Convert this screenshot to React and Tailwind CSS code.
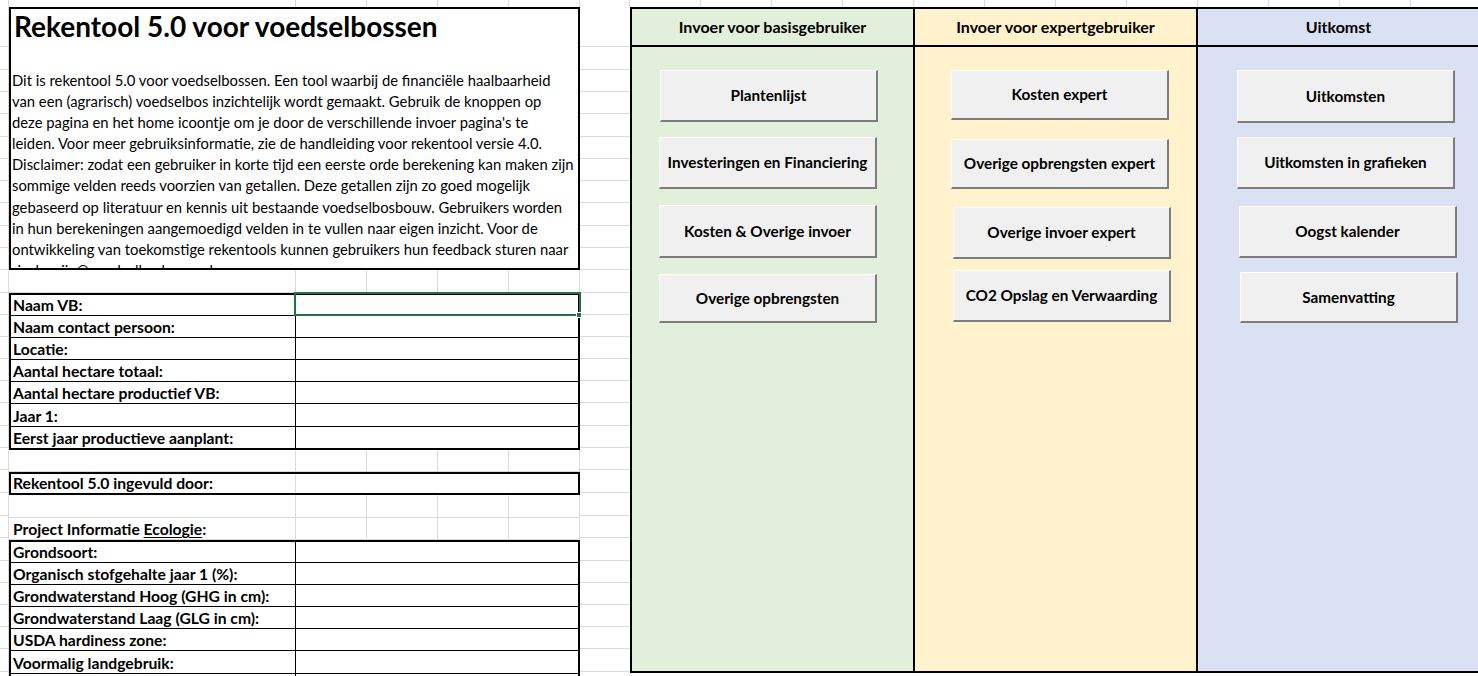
import React from 'react';

const GRID = 'border-[#dadada]';

// row heights (px) of the sheet, starting at y=7
const rowHeights = [40, 23, 22, 22, 23, 22, 22, 22, 23, 22, 22, 23, 22, 22, 22, 22, 22, 23, 22, 22, 23, 23, 22, 23, 22, 22, 22, 22, 23, 22];
const hCls = { 40: 'h-[40px]', 23: 'h-[23px]', 22: 'h-[22px]', 21: 'h-[21px]' };

const description = [
  'Dit is rekentool 5.0 voor voedselbossen. Een tool waarbij de financiële haalbaarheid',
  'van een (agrarisch) voedselbos inzichtelijk wordt gemaakt. Gebruik de knoppen op',
  "deze pagina en het home icoontje om je door de verschillende invoer pagina's te",
  'leiden. Voor meer gebruiksinformatie, zie de handleiding voor rekentool versie 4.0.',
  'Disclaimer: zodat een gebruiker in korte tijd een eerste orde berekening kan maken zijn',
  'sommige velden reeds voorzien van getallen. Deze getallen zijn zo goed mogelijk',
  'gebaseerd op literatuur en kennis uit bestaande voedselbosbouw. Gebruikers worden',
  'in hun berekeningen aangemoedigd velden in te vullen naar eigen inzicht. Voor de',
  'ontwikkeling van toekomstige rekentools kunnen gebruikers hun feedback sturen naar',
  'rinske.vijn@voedselbosbouw.nl',
];

const projectRows = [
  { label: 'Naam VB:', h: 21, selected: true },
  { label: 'Naam contact persoon:', h: 22 },
  { label: 'Locatie:', h: 22 },
  { label: 'Aantal hectare totaal:', h: 22 },
  { label: 'Aantal hectare productief VB:', h: 22 },
  { label: 'Jaar 1:', h: 23 },
  { label: 'Eerst jaar productieve aanplant:', h: 21 },
];

const ecologyRows = [
  { label: 'Grondsoort:', h: 21 },
  { label: 'Organisch stofgehalte jaar 1 (%):', h: 22 },
  { label: 'Grondwaterstand Hoog (GHG in cm):', h: 22 },
  { label: 'Grondwaterstand Laag (GLG in cm):', h: 22 },
  { label: 'USDA hardiness zone:', h: 22 },
  { label: 'Voormalig landgebruik:', h: 23 },
  { label: '', h: 22 },
];

const panels = [
  {
    title: 'Invoer voor basisgebruiker',
    bg: 'bg-[#e2efda]',
    buttons: [
      { label: 'Plantenlijst', cls: 'ml-[28px] mt-[23px] h-[52px]' },
      { label: 'Investeringen en Financiering', cls: 'ml-[27px] mt-[15px] h-[52px]' },
      { label: 'Kosten & Overige invoer', cls: 'ml-[27px] mt-[16px] h-[53px]' },
      { label: 'Overige opbrengsten', cls: 'ml-[27px] mt-[16px] h-[49px]' },
    ],
  },
  {
    title: 'Invoer voor expertgebruiker',
    bg: 'bg-[#fff2cc]',
    buttons: [
      { label: 'Kosten expert', cls: 'ml-[36px] mt-[23px] h-[50px]' },
      { label: 'Overige opbrengsten expert', cls: 'ml-[36px] mt-[19px] h-[50px]' },
      { label: 'Overige invoer expert', cls: 'ml-[38px] mt-[18px] h-[52px]' },
      { label: 'CO2 Opslag en Verwaarding', cls: 'ml-[38px] mt-[11px] h-[52px]' },
    ],
  },
  {
    title: 'Uitkomst',
    bg: 'bg-[#d9e1f2]',
    buttons: [
      { label: 'Uitkomsten', cls: 'ml-[39px] mt-[23px] h-[53px]' },
      { label: 'Uitkomsten in grafieken', cls: 'ml-[39px] mt-[14px] h-[52px]' },
      { label: 'Oogst kalender', cls: 'ml-[41px] mt-[17px] h-[52px]' },
      { label: 'Samenvatting', cls: 'ml-[42px] mt-[14px] h-[51px]' },
    ],
  },
];

const GapRow = ({ h, children }) => (
  <div className={`flex ${hCls[h]} border-b ${GRID}`}>
    <div className={`relative w-[287px] shrink-0 border-r ${GRID}`}>{children}</div>
    <div className={`w-[71px] shrink-0 border-r ${GRID}`} />
    <div className={`w-[71px] shrink-0 border-r ${GRID}`} />
    <div className={`w-[71px] shrink-0 border-r ${GRID}`} />
    <div className={`w-[71px] shrink-0 border-r ${GRID}`} />
  </div>
);

const SideStrip = ({ width }) => (
  <div className={`${width} shrink-0 flex flex-col`}>
    {rowHeights.map((h, i) => (
      <div key={i} className={`${hCls[h]} shrink-0 border-b ${GRID}`} />
    ))}
  </div>
);

const LabelTable = ({ rows }) => (
  <div className="border-2 border-black bg-white">
    {rows.map((r, i) => (
      <div
        key={i}
        className={`flex ${hCls[r.h]} ${i < rows.length - 1 ? 'border-b border-black' : ''}`}
      >
        <div className="w-[285px] shrink-0 border-r border-black flex items-end pl-[2px] text-[15.7px] font-bold leading-[20px] whitespace-nowrap">
          {r.label}
        </div>
        <div className="relative flex-1">
          {r.selected && (
            <>
              <div className="absolute -top-[3px] -left-[2px] -right-[3px] -bottom-[1px] border-2 border-[#217346]" />
              <div className="absolute -bottom-[3px] -right-[4px] w-[6px] h-[6px] bg-[#217346] border border-white" />
            </>
          )}
        </div>
      </div>
    ))}
  </div>
);

const Panel = ({ panel }) => (
  <div className={`w-[283px] shrink-0 border-r-2 border-black flex flex-col ${panel.bg}`}>
    <div className="h-[38px] shrink-0 border-b-2 border-black flex items-center justify-center text-[16px] font-bold">
      {panel.title}
    </div>
    {panel.buttons.map((b) => (
      <div
        key={b.label}
        className={`${b.cls} w-[218px] shrink-0 flex items-center justify-center bg-[#f0f0f0] border-t border-l border-t-white border-l-white border-r-2 border-b-2 border-r-[#7d7d7d] border-b-[#7d7d7d] text-[15.3px] font-bold whitespace-nowrap`}
      >
        {b.label}
      </div>
    ))}
  </div>
);

export default function App() {
  return (
    <div className="w-[1478px] h-[676px] overflow-hidden bg-white text-black font-['Lato','Liberation_Sans',sans-serif]">
      {/* column header strip (row partially scrolled away) */}
      <div className="flex h-[7px]">
        <div className={`w-[9px] shrink-0 border-r ${GRID}`} />
        <div className={`w-[287px] shrink-0 border-r ${GRID}`} />
        {[0, 1, 2, 3].map((i) => (
          <div key={i} className={`w-[71px] shrink-0 border-r ${GRID}`} />
        ))}
        <div className={`w-[50px] shrink-0 border-r ${GRID}`} />
        {Array.from({ length: 12 }).map((_, i) => (
          <div key={i} className={`w-[71px] shrink-0 border-r ${GRID}`} />
        ))}
      </div>

      <div className="flex items-start">
        <div className={`border-r ${GRID}`}>
          <SideStrip width="w-[8px]" />
        </div>

        {/* left info column */}
        <div className="w-[571px] shrink-0 flex flex-col">
          <div className="h-[263px] shrink-0 border-2 border-black bg-white overflow-hidden">
            <h1 className="ml-[3px] text-[28px] font-bold leading-[34px] whitespace-nowrap">
              Rekentool 5.0 voor voedselbossen
            </h1>
            <div className="mt-[27px] pl-[1px] text-[14.8px] leading-[21.1px]">
              {description.map((line) => (
                <div key={line} className="whitespace-nowrap">
                  {line}
                </div>
              ))}
            </div>
          </div>

          <GapRow h={23} />
          <LabelTable rows={projectRows} />
          <GapRow h={22} />

          <div className="h-[23px] shrink-0 flex border-2 border-black bg-white">
            <div className={`w-[285px] shrink-0 border-r ${GRID} flex items-end pl-[2px] text-[15.7px] font-bold leading-[19px] whitespace-nowrap`}>
              Rekentool 5.0 ingevuld door:
            </div>
            <div className="flex-1" />
          </div>

          <GapRow h={23} />
          <GapRow h={22}>
            <div className="absolute left-[4px] bottom-0 text-[15.7px] font-bold leading-[20px] whitespace-nowrap">
              Project Informatie <span className="underline underline-offset-2">Ecologie</span>:
            </div>
          </GapRow>
          <LabelTable rows={ecologyRows} />
        </div>

        <SideStrip width="w-[50px]" />

        {/* navigation panels */}
        <div className="flex h-[666px] shrink-0 border-l-2 border-b-2 border-t-2 border-black">
          {panels.map((p) => (
            <Panel key={p.title} panel={p} />
          ))}
        </div>
      </div>
    </div>
  );
}
